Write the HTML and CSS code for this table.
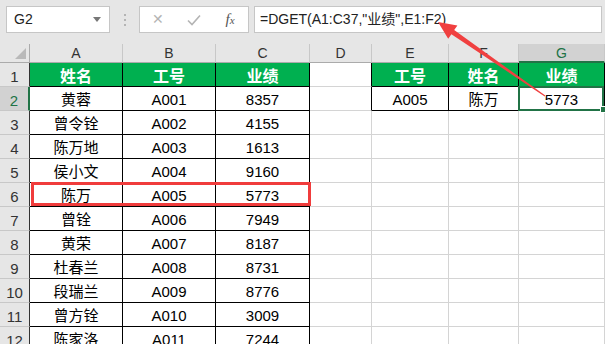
FILE: index.html
```html
<!DOCTYPE html>
<html lang="zh-CN">
  <head>
    <meta charset="UTF-8" />
    <meta name="viewport" content="width=device-width, initial-scale=1.0" />
    <title>DGET</title>
    <link rel="stylesheet" href="styles.css">
  </head>
  <body>
    <div class="toolbar">
      <div class="namebox">G2<span class="caret"></span></div>
      <div class="dots"><i></i><i></i><i></i></div>
      <div class="fxbox">
        <span class="btn">&#x2715;</span>
        <span class="btn check">
          <svg width="14" height="12" viewBox="0 0 14 12"><path d="M1 6.5 L5 10.5 L13 1.5" fill="none" stroke="#b4b4b4" stroke-width="1.6"/></svg>
        </span>
        <span class="btn fx"><i>f</i><small>x</small></span>
      </div>
      <div class="formula">=DGET(A1:C37,"业绩",E1:F2)</div>
    </div>

    <div class="sheet">
      <!-- column headers -->
      <div class="corner"><span class="tri"></span></div>
      <div class="ch">A</div>
      <div class="ch">B</div>
      <div class="ch">C</div>
      <div class="ch">D</div>
      <div class="ch">E</div>
      <div class="ch">F</div>
      <div class="ch ch-on">G</div>

      <div class="rh">1</div>
      <div class="c hd">姓名</div>
      <div class="c hd">工号</div>
      <div class="c hd">业绩</div>
      <div class="c edge"></div>
      <div class="c hd">工号</div>
      <div class="c hd">姓名</div>
      <div class="c hd">业绩</div>

      <div class="rh rh-on">2</div>
      <div class="c d">黄蓉</div>
      <div class="c d">A001</div>
      <div class="c d">8357</div>
      <div class="c edge"></div>
      <div class="c d">A005</div>
      <div class="c d">陈万</div>
      <div class="c d sel">5773<span class="handle"></span></div>

      <div class="rh">3</div>
      <div class="c d">曾令铨</div>
      <div class="c d">A002</div>
      <div class="c d">4155</div>
      <div class="c"></div><div class="c"></div><div class="c"></div><div class="c"></div>

      <div class="rh">4</div>
      <div class="c d">陈万地</div>
      <div class="c d">A003</div>
      <div class="c d">1613</div>
      <div class="c"></div><div class="c"></div><div class="c"></div><div class="c"></div>

      <div class="rh">5</div>
      <div class="c d">侯小文</div>
      <div class="c d">A004</div>
      <div class="c d">9160</div>
      <div class="c"></div><div class="c"></div><div class="c"></div><div class="c"></div>

      <div class="rh">6</div>
      <div class="c d">陈万</div>
      <div class="c d">A005</div>
      <div class="c d">5773</div>
      <div class="c"></div><div class="c"></div><div class="c"></div><div class="c"></div>

      <div class="rh">7</div>
      <div class="c d">曾铨</div>
      <div class="c d">A006</div>
      <div class="c d">7949</div>
      <div class="c"></div><div class="c"></div><div class="c"></div><div class="c"></div>

      <div class="rh">8</div>
      <div class="c d">黄荣</div>
      <div class="c d">A007</div>
      <div class="c d">8187</div>
      <div class="c"></div><div class="c"></div><div class="c"></div><div class="c"></div>

      <div class="rh">9</div>
      <div class="c d">杜春兰</div>
      <div class="c d">A008</div>
      <div class="c d">8731</div>
      <div class="c"></div><div class="c"></div><div class="c"></div><div class="c"></div>

      <div class="rh">10</div>
      <div class="c d">段瑞兰</div>
      <div class="c d">A009</div>
      <div class="c d">8776</div>
      <div class="c"></div><div class="c"></div><div class="c"></div><div class="c"></div>

      <div class="rh">11</div>
      <div class="c d">曾方铨</div>
      <div class="c d">A010</div>
      <div class="c d">3009</div>
      <div class="c"></div><div class="c"></div><div class="c"></div><div class="c"></div>

      <div class="rh">12</div>
      <div class="c d">陈家洛</div>
      <div class="c d">A011</div>
      <div class="c d">7244</div>
      <div class="c"></div><div class="c"></div><div class="c"></div><div class="c"></div>

      <!-- highlight around the matching record -->
      <div class="mark"></div>
    </div>

    <!-- callout arrow pointing at the formula -->
    <svg class="arrow" width="605" height="344" viewBox="0 0 605 344">
      <polygon fill="#f04040" points="438,22 457.4,25.6 454.2,30.1 545.3,95.6 544.7,96.4 451.4,34.3 448.2,38.8"/>
    </svg>
  </body>
</html>
```

FILE: styles.css
```css
body {
  margin: 0;
  width: 605px;
  height: 344px;
  overflow: hidden;
  position: relative;
  background: #fff;
  font-family: "Liberation Sans", "Noto Sans CJK SC", sans-serif;
  color: #000;
}

/* formula bar */
.toolbar {
  height: 44px;
  background: #e6e6e6;
  display: flex;
  align-items: flex-start;
  padding-top: 6px;
  box-sizing: border-box;
}
.namebox {
  margin-left: 6px;
  width: 104px;
  height: 27px;
  box-sizing: border-box;
  background: #fff;
  border: 1px solid #c6c6c6;
  padding-left: 7px;
  font-size: 14px;
  line-height: 25px;
  color: #222;
  position: relative;
}
.caret {
  position: absolute;
  right: 8px;
  top: 10px;
  border-left: 4px solid transparent;
  border-right: 4px solid transparent;
  border-top: 5px solid #777;
}
.dots {
  width: 29px;
  height: 27px;
  display: flex;
  flex-direction: column;
  align-items: center;
  justify-content: center;
  gap: 3px;
}
.dots i {
  width: 2px;
  height: 2px;
  background: #b4b4b4;
}
.fxbox {
  width: 110px;
  height: 27px;
  box-sizing: border-box;
  background: #fff;
  border: 1px solid #c6c6c6;
  display: flex;
  align-items: center;
}
.btn {
  width: 36px;
  text-align: center;
  color: #b4b4b4;
  font-size: 14px;
  line-height: 25px;
}
.check {
  display: flex;
  justify-content: center;
}
.fx {
  color: #555;
  font-family: "Liberation Serif", serif;
  font-size: 15px;
}
.fx small {
  font-size: 11px;
  font-style: italic;
}
.formula {
  margin-left: 5px;
  width: 348px;
  height: 27px;
  box-sizing: border-box;
  background: #fff;
  border: 1px solid #c6c6c6;
  padding-left: 5px;
  font-size: 14px;
  line-height: 25px;
  color: #222;
}

/* worksheet grid */
.sheet {
  position: relative;
  display: grid;
  grid-template-columns: 30px 93px 93px 94px 62px 77px 70px 86px;
  grid-template-rows: 19px repeat(12, 24px);
}
.corner,
.ch {
  background: #e6e6e6;
  border-bottom: 1px solid #ababab;
  box-sizing: border-box;
}
.corner {
  border-right: 1px solid #ababab;
  position: relative;
}
.tri {
  position: absolute;
  right: 3px;
  bottom: 3px;
  border-left: 11px solid transparent;
  border-bottom: 11px solid #b9b9b9;
}
.ch {
  border-right: 1px solid #c8c8c8;
  text-align: center;
  font-size: 14px;
  line-height: 19px;
  color: #333;
}
.ch-on {
  background: #d2d2d2;
  color: #217346;
  border-bottom: 2px solid #217346;
}
.rh {
  background: #e6e6e6;
  border-right: 1px solid #333;
  border-bottom: 1px solid #c8c8c8;
  box-sizing: border-box;
  text-align: center;
  font-size: 15px;
  line-height: 28px;
  color: #333;
}
.rh-on {
  background: #d2d2d2;
  color: #217346;
  border-right: 2px solid #217346;
}
.c {
  border-right: 1px solid #d4d4d4;
  border-bottom: 1px solid #d4d4d4;
  box-sizing: border-box;
  text-align: center;
  font-size: 15px;
  line-height: 25px;
}
.hd,
.d {
  border-right-color: #000;
  border-bottom-color: #000;
}
.hd {
  background: #00b050;
  color: #fff;
  font-weight: bold;
  font-size: 16px;
  font-family: "Noto Sans CJK SC", sans-serif;
}
.edge {
  border-right-color: #000;
}
.sel {
  position: relative;
}
.sel::after {
  content: "";
  position: absolute;
  left: -1px;
  top: -1px;
  right: 0;
  bottom: -1px;
  border: 2px solid #217346;
}
.handle {
  position: absolute;
  right: -3px;
  bottom: -3px;
  width: 5px;
  height: 5px;
  background: #217346;
  border: 1px solid #fff;
  z-index: 1;
}
.mark {
  position: absolute;
  left: 31px;
  top: 138px;
  width: 280px;
  height: 24px;
  box-sizing: border-box;
  border: 3px solid #f03c3c;
}

.arrow {
  position: absolute;
  left: 0;
  top: 0;
}
```
